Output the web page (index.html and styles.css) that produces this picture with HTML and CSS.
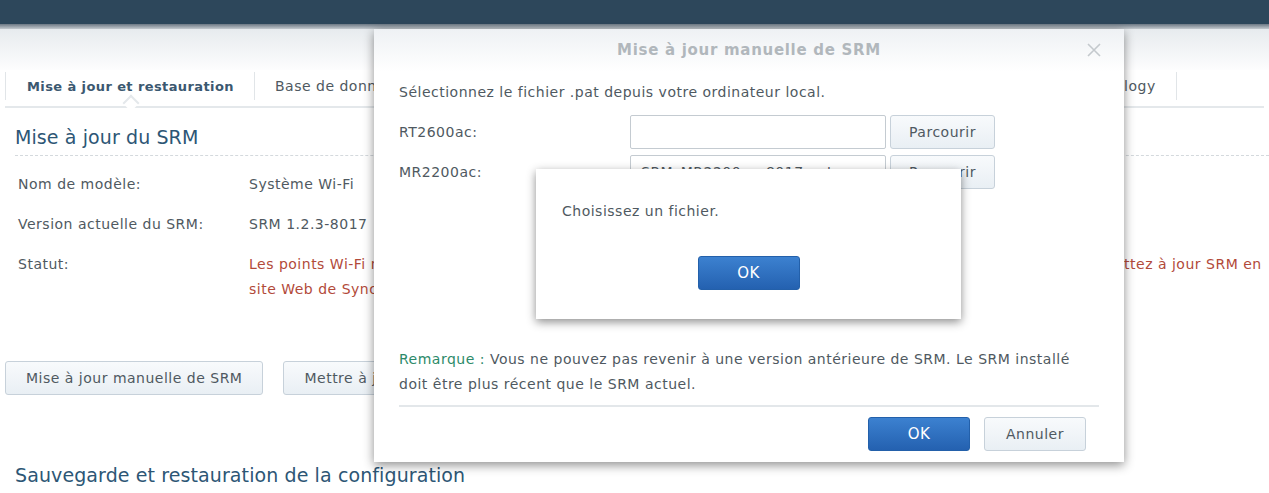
FILE: index.html
```html
<!DOCTYPE html>
<html lang="fr">
<head>
<meta charset="utf-8">
<title>SRM</title>
<link rel="stylesheet" href="styles.css">
</head>
<body>
<div class="topbar"></div>
<div class="shade"></div>
<div class="app">
  <div class="header-band"></div>
  <nav class="tabs">
    <div class="tab active">Mise à jour et restauration</div>
    <div class="tab">Base de données de sécurité</div>
    <div class="tab">Réinitialisation</div>
    <div class="tab">Paramètres régionaux</div>
    <div class="tab">Notifications</div>
    <div class="tab">Compte Synology</div>
  </nav>
  <main class="content">
    <h2 class="section-title first">Mise à jour du SRM</h2>
    <div class="info">
      <div class="row"><span class="label">Nom de modèle:</span><span class="value">Système Wi-Fi</span></div>
      <div class="row"><span class="label">Version actuelle du SRM:</span><span class="value">SRM 1.2.3-8017</span></div>
      <div class="row"><span class="label">Statut:</span><span class="value status">Les points Wi-Fi ne sont pas à jour. Téléchargez le tout dernier fichier .pat depuis le Centre de téléchargement et mettez à jour SRM en<br>site Web de Synology.</span></div>
    </div>
    <div class="actions">
      <button class="btn">Mise à jour manuelle de SRM</button>
      <button class="btn">Mettre à jour les points Wi-Fi</button>
    </div>
    <h2 class="section-title second">Sauvegarde et restauration de la configuration</h2>
  </main>
</div>

<div class="modal">
  <div class="modal-header">
    <span class="modal-title">Mise à jour manuelle de SRM</span>
    <span class="close">
      <svg width="16" height="16" viewBox="0 0 16 16"><path d="M2 2 L14 14 M14 2 L2 14" stroke="#c4c9cd" stroke-width="1.6" fill="none"/></svg>
    </span>
  </div>
  <div class="modal-body">
    <p class="intro">Sélectionnez le fichier .pat depuis votre ordinateur local.</p>
    <div class="frow"><span class="flabel">RT2600ac:</span><span class="input"></span><button class="btn browse">Parcourir</button></div>
    <div class="frow"><span class="flabel">MR2200ac:</span><span class="input">SRM_MR2200ac_8017.pat</span><button class="btn browse">Parcourir</button></div>
    <div class="spacer"></div>
    <p class="note"><span class="note-key">Remarque :</span> Vous ne pouvez pas revenir à une version antérieure de SRM. Le SRM installé doit être plus récent que le SRM actuel.</p>
  </div>
  <div class="modal-footer">
    <button class="btn primary">OK</button>
    <button class="btn">Annuler</button>
  </div>
</div>

<div class="alert">
  <p class="alert-text">Choisissez un fichier.</p>
  <div class="alert-actions"><button class="btn primary">OK</button></div>
</div>
</body>
</html>
```
FILE: styles.css
```css
* { box-sizing: border-box; }
html, body { margin: 0; padding: 0; }
body {
  width: 1269px;
  height: 493px;
  overflow: hidden;
  position: relative;
  background: #fff;
  font-family: "DejaVu Sans", Verdana, sans-serif;
  font-size: 14px;
  letter-spacing: 0.5px;
  color: #4f5961;
}
.topbar { height: 24px; background: #2d475b; }
.shade { height: 5px; background: linear-gradient(#6c7884, #c3c9ce); }
.app { position: relative; }
.header-band { height: 41px; background: linear-gradient(#e7ebee, #fdfdfe); }
.tabs {
  display: flex;
  height: 38px;
  margin: 0 5px;
  border-bottom: 2px solid #e4e8eb;
  white-space: nowrap;
}
.tab {
  position: relative;
  padding: 0 20px;
  display: flex;
  align-items: center;
  border-left: 1px solid #e1e5e8;
  margin: 2px 0 6px;
  color: #4f5961;
}
.tab:last-child { border-right: 1px solid #e1e5e8; }
.tab.active {
  font-weight: bold;
  color: #3b5870;
  font-size: 13px;
  letter-spacing: 0.4px;
  padding: 0 20px 0 21px;
}
.tab.active::after {
  content: "";
  position: absolute;
  left: 50%;
  bottom: -9px;
  width: 10px;
  height: 10px;
  margin-left: -5px;
  background: #fff;
  border-left: 2px solid #e4e8eb;
  border-top: 2px solid #e4e8eb;
  transform: rotate(45deg);
}
.content { padding: 0 0 0 15px; }
.section-title {
  margin: 0;
  font-weight: normal;
  font-size: 19px;
  letter-spacing: 0.1px;
  color: #2d5675;
}
.section-title.first {
  padding: 18px 0 7px;
  border-bottom: 1px dashed #d4d9dd;
}
.info { padding: 20px 0 0 3px; }
.row { display: flex; height: 40px; align-items: flex-start; line-height: 17px; white-space: nowrap; }
.label { width: 231px; flex: none; }
.status { color: #b24a3a; line-height: 25px; margin-top: -4px; }
.actions { display: flex; gap: 20px; margin: 65px 0 0 -10px; }
.btn {
  font-family: inherit;
  font-size: 14px;
  letter-spacing: 0.5px;
  height: 34px;
  padding: 0 20px;
  border: 1px solid #c7d1da;
  border-radius: 3px;
  background: linear-gradient(#f8fafc, #e9eff4);
  color: #4f5961;
  cursor: default;
}
.section-title.second { margin-top: 69px; }

/* modal */
.modal {
  position: absolute;
  left: 374px;
  top: 29px;
  width: 750px;
  height: 433px;
  background: #fff;
  box-shadow: 0 3px 10px rgba(0,0,0,0.45);
  display: flex;
  flex-direction: column;
}
.modal-header {
  height: 42px;
  background: linear-gradient(#eef1f4, #ffffff);
  display: flex;
  align-items: center;
  justify-content: center;
  position: relative;
}
.modal-title { font-weight: bold; font-size: 15px; letter-spacing: 0.7px; color: #b1b7bc; }
.close { position: absolute; right: 22px; top: 13px; width: 16px; height: 16px; }
.modal-body { padding: 0 25px; flex: 1; display: flex; flex-direction: column; }
.intro { margin: 13px 0 14px; line-height: 17px; }
.frow { display: flex; align-items: center; height: 34px; margin-bottom: 6px; }
.flabel { width: 231px; flex: none; }
.input {
  width: 256px;
  height: 34px;
  flex: none;
  border: 1px solid #c4cbd1;
  border-radius: 2px;
  background: #fff;
  padding: 8px 10px;
  white-space: nowrap;
  overflow: hidden;
  color: #4f5961;
}
.browse { margin-left: 4px; width: 105px; padding: 0; }
.spacer { flex: 1; }
.note { margin: 0 0 10px; line-height: 25px; padding-bottom: 8px; border-bottom: 2px solid #e3e7ea; }
.note-key { color: #2c8a69; }
.modal-footer {
  display: flex;
  justify-content: flex-end;
  gap: 14px;
  padding: 0 38px 11px 0;
}
.modal-footer .btn { width: 102px; padding: 0; }
.btn.primary {
  background: linear-gradient(#3c81d0, #2461b0);
  border-color: #2360aa;
  color: #fff;
  font-size: 15px;
}

/* alert */
.alert {
  position: absolute;
  left: 536px;
  top: 169px;
  width: 425px;
  height: 150px;
  background: #fff;
  box-shadow: 0 3px 9px rgba(0,0,0,0.45);
  display: flex;
  flex-direction: column;
}
.alert-text { margin: 34px 0 0 26px; line-height: 17px; }
.alert-actions { display: flex; justify-content: center; margin-top: 36px; }
.alert-actions .btn { width: 102px; padding: 0; }
```
